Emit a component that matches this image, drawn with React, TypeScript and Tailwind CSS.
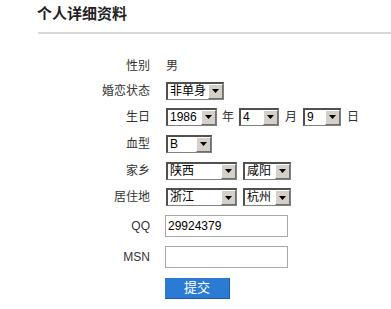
import React from 'react';

const font = { fontFamily: '"Liberation Sans", "Noto Sans CJK SC", sans-serif' };

function FakeSelect({ value, width }: { value: string; width: string }) {
  return (
    <div
      className={`${width} h-[18px] flex items-stretch bg-white border-t-2 border-l-2 border-b border-r border-t-[#505050] border-l-[#505050] border-b-[#808080] border-r-[#808080]`}
    >
      <div className="flex-1 pl-[2px] text-[12px] leading-[15px] text-black overflow-hidden whitespace-nowrap">{value}</div>
      <div className="w-[15px] bg-[#d4d0c8] border-t border-l border-b border-r border-t-white border-l-white border-b-[#6f6f6f] border-r-[#6f6f6f] flex items-center justify-center">
        <svg width="7" height="4" viewBox="0 0 7 4">
          <polygon points="0,0 7,0 3.5,4" fill="#000" />
        </svg>
      </div>
    </div>
  );
}

function Row({ label, h, children }: { label: string; h: string; children: React.ReactNode }) {
  return (
    <div className={`grid grid-cols-[150px_1fr] gap-x-[16px] items-center ${h}`}>
      <div className="text-right text-[12px] text-[#333]">{label}</div>
      <div className="flex items-center">{children}</div>
    </div>
  );
}

export default function App() {
  return (
    <div className="w-[391px] h-[309px] bg-white overflow-hidden" style={font}>
      <div className="pl-[37px] pt-[4px] h-[25px] text-[15px] leading-[20px] font-bold text-[#222]">个人详细资料</div>
      <div className="mt-[7px] ml-[38px] h-[2px] bg-[#d8d8d8]" />
      <div className="pt-[19px]">
        <Row label="性别" h="h-[25px]">
          <span className="text-[12px] text-[#333]">男</span>
        </Row>
        <Row label="婚恋状态" h="h-[25px]">
          <FakeSelect value="非单身" width="w-[58px]" />
        </Row>
        <Row label="生日" h="h-[27px]">
          <FakeSelect value="1986" width="w-[51px]" />
          <span className="mx-[5px] text-[12px] text-[#333]">年</span>
          <FakeSelect value="4" width="w-[40px]" />
          <span className="mx-[6px] text-[12px] text-[#333]">月</span>
          <FakeSelect value="9" width="w-[38px]" />
          <span className="ml-[6px] text-[12px] text-[#333]">日</span>
        </Row>
        <Row label="血型" h="h-[27px]">
          <FakeSelect value="B" width="w-[46px]" />
        </Row>
        <Row label="家乡" h="h-[27px]">
          <FakeSelect value="陕西" width="w-[71px]" />
          <div className="w-[6px]" />
          <FakeSelect value="咸阳" width="w-[48px]" />
        </Row>
        <Row label="居住地" h="h-[26px]">
          <FakeSelect value="浙江" width="w-[71px]" />
          <div className="w-[6px]" />
          <FakeSelect value="杭州" width="w-[48px]" />
        </Row>
        <Row label="QQ" h="h-[31px]">
          <div className="-ml-px w-[123px] h-[22px] border border-[#a8a8a8] pl-[2px] text-[12px] leading-[20px] text-black">29924379</div>
        </Row>
        <Row label="MSN" h="h-[31px]">
          <div className="-ml-px w-[123px] h-[22px] border border-[#a8a8a8]" />
        </Row>
        <div className="pl-[165px] pt-[3px]">
          <button className="w-[65px] h-[21px] bg-[#2b7bd4] border-b border-r border-[#1c5ca8] text-white text-[13px] leading-[19px]">提交</button>
        </div>
      </div>
    </div>
  );
}
